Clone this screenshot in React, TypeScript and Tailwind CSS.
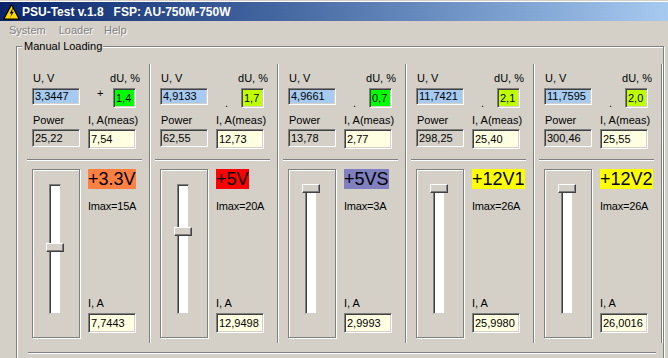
import React from 'react';

type Rail = {
  u: string;
  du: string;
  duBg: string;
  sign: string;
  power: string;
  meas: string;
  name: string;
  nameBg: string;
  imax: number;
  ia: string;
  val: number;
};

const rails: Rail[] = [
  { u: '3,3447', du: '1,4', duBg: 'bg-[#00ff00]', sign: '+', power: '25,22', meas: '7,54', name: '+3.3V', nameBg: 'bg-[#ff8040]', imax: 15, ia: '7,7443', val: 7.7443 },
  { u: '4,9133', du: '1,7', duBg: 'bg-[#c0ff00]', sign: '.', power: '62,55', meas: '12,73', name: '+5V', nameBg: 'bg-[#ff0000]', imax: 20, ia: '12,9498', val: 12.9498 },
  { u: '4,9661', du: '0,7', duBg: 'bg-[#00ff00]', sign: '.', power: '13,78', meas: '2,77', name: '+5VS', nameBg: 'bg-[#8080c0]', imax: 3, ia: '2,9993', val: 2.9993 },
  { u: '11,7421', du: '2,1', duBg: 'bg-[#c0ff00]', sign: '.', power: '298,25', meas: '25,40', name: '+12V1', nameBg: 'bg-[#ffff00]', imax: 26, ia: '25,9980', val: 25.998 },
  { u: '11,7595', du: '2,0', duBg: 'bg-[#c0ff00]', sign: '.', power: '300,46', meas: '25,55', name: '+12V2', nameBg: 'bg-[#ffff00]', imax: 26, ia: '26,0016', val: 26.0016 },
];

// sunken win32 edit box
const sunken =
  'border border-t-[#808080] border-l-[#808080] border-r-white border-b-white shadow-[inset_1px_1px_0_#404040,inset_-1px_-1px_0_#d4d0c8] pl-[2px] flex items-center leading-none';

function WarnIcon() {
  return (
    <svg width="17" height="16" viewBox="0 0 17 16">
      <path d="M8.5 0.8 L16.3 15.2 L0.7 15.2 Z" fill="#ffd800" stroke="#000" strokeWidth="1.2" strokeLinejoin="round" />
      <path d="M9.6 4.2 L6.6 9.4 L8.6 9.4 L7.2 13.6 L10.8 7.8 L8.8 7.8 L10.2 4.2 Z" fill="#000" />
    </svg>
  );
}

function Slider({ val, max }: { val: number; max: number }) {
  const ratio = Math.min(1, Math.max(0, val / max));
  const top = Math.round((1 - ratio) * 121);
  return (
    <div className="w-[48px] h-[169px] border border-[#808080] shadow-[inset_1px_1px_0_#fff,1px_1px_0_#fff]">
      <div className="relative ml-[16px] mt-[14px] w-[12px] h-[130px]">
        <div className="w-full h-full bg-white border border-t-[#808080] border-l-[#808080] border-r-[#d4d0c8] border-b-[#d4d0c8] shadow-[inset_1px_1px_0_#404040]" />
        <div
          className="absolute left-[-3px] w-[18px] h-[9px] bg-[#d4d0c8] border border-t-white border-l-white border-r-[#404040] border-b-[#404040] shadow-[inset_-1px_-1px_0_#808080]"
          style={{ top }}
        />
      </div>
    </div>
  );
}

function Panel({ r }: { r: Rail }) {
  return (
    <div className="flex w-[128px] shrink-0">
      <div className="w-[122px] h-[279px] flex flex-col pt-[8px]">
        {/* U / dU labels */}
        <div className="flex h-[13px] leading-[13px]">
          <span className="ml-[6px]">U, V</span>
          <span className="ml-auto mr-[9px]">dU, %</span>
        </div>
        <div className="flex items-start mt-[3px] h-[20px]">
          <div className={`ml-[5px] w-[48px] h-[17px] bg-[#a6caf0] ${sunken}`}>{r.u}</div>
          <div className="w-[33px] h-[20px] relative">
            <span className={`absolute left-[17px] leading-[13px] ${r.sign === '+' ? 'top-[-1px]' : 'top-[9px]'}`}>{r.sign}</span>
          </div>
          <div className={`w-[23px] h-[20px] ${r.duBg} ${sunken}`}>{r.du}</div>
        </div>
        {/* Power / I meas */}
        <div className="flex h-[13px] leading-[13px] mt-[6px]">
          <span className="w-[61px] pl-[6px]">Power</span>
          <span>I, A(meas)</span>
        </div>
        <div className="flex items-start mt-[2px] h-[20px]">
          <div className={`ml-[5px] w-[48px] h-[18px] bg-[#d4d0c8] ${sunken}`}>{r.power}</div>
          <div className={`ml-[8px] w-[48px] h-[20px] bg-[#ffffe1] ${sunken}`}>{r.meas}</div>
        </div>
        <div className="mt-[10px] w-[115px] h-[2px] border-t border-[#808080] bg-white" />
        {/* load control */}
        <div className="flex mt-[8px]">
          <div className="ml-[5px]">
            <Slider val={r.val} max={r.imax} />
          </div>
          <div className="ml-[8px] h-[169px] flex flex-col">
            <span className={`self-start h-[20px] text-[18px] leading-[20px] ${r.nameBg}`}>{r.name}</span>
            <span className="mt-[11px] h-[13px] leading-[13px] tracking-[-0.2px]">Imax={r.imax}A</span>
            <span className="mt-auto h-[13px] leading-[13px]">I, A</span>
            <div className={`mt-[3px] mb-[5px] w-[48px] h-[20px] bg-[#ffffe1] ${sunken}`}>{r.ia}</div>
          </div>
        </div>
      </div>
      <div className="w-[2px] h-[279px] border-l border-[#808080] bg-white" />
    </div>
  );
}

export default function App() {
  return (
    <div className="w-[668px] h-[358px] overflow-hidden bg-[#d4d0c8] text-black text-[11px] font-['Liberation_Sans',Arial,sans-serif]">
      {/* Title bar */}
      <div className="h-[2px] border-t border-[#d4d0c8] bg-white" />
      <div className="h-[19px] flex items-center bg-gradient-to-r from-[#0a246a] to-[#a6caf0]">
        <div className="ml-[3px] flex items-center">
          <WarnIcon />
        </div>
        <span className="ml-[2px] text-white font-bold text-[12px] whitespace-pre leading-none">
          PSU-Test v.1.8   FSP: AU-750M-750W
        </span>
      </div>

      {/* Menu */}
      <div className="h-[19px] flex items-center text-[#808080] [text-shadow:1px_1px_0_#fff]">
        <span className="ml-[9px]">System</span>
        <span className="ml-[13px]">Loader</span>
        <span className="ml-[11px]">Help</span>
      </div>

      {/* Manual Loading group */}
      <div className="relative mt-[6px] ml-[16px] w-[648px] h-[330px] border border-[#808080] shadow-[inset_1px_1px_0_#fff,1px_1px_0_#fff]">
        <span className="absolute left-[5px] top-[-7px] pl-[2px] pr-[1px] leading-[13px] bg-[#d4d0c8]">Manual Loading</span>
        <div className="flex pl-[10px] pt-[17px]">
          {rails.map((r) => (
            <Panel key={r.name} r={r} />
          ))}
        </div>
        <div className="mt-[9px] ml-[11px] w-[628px] h-[2px] border-t border-[#808080] bg-white" />
      </div>
    </div>
  );
}
